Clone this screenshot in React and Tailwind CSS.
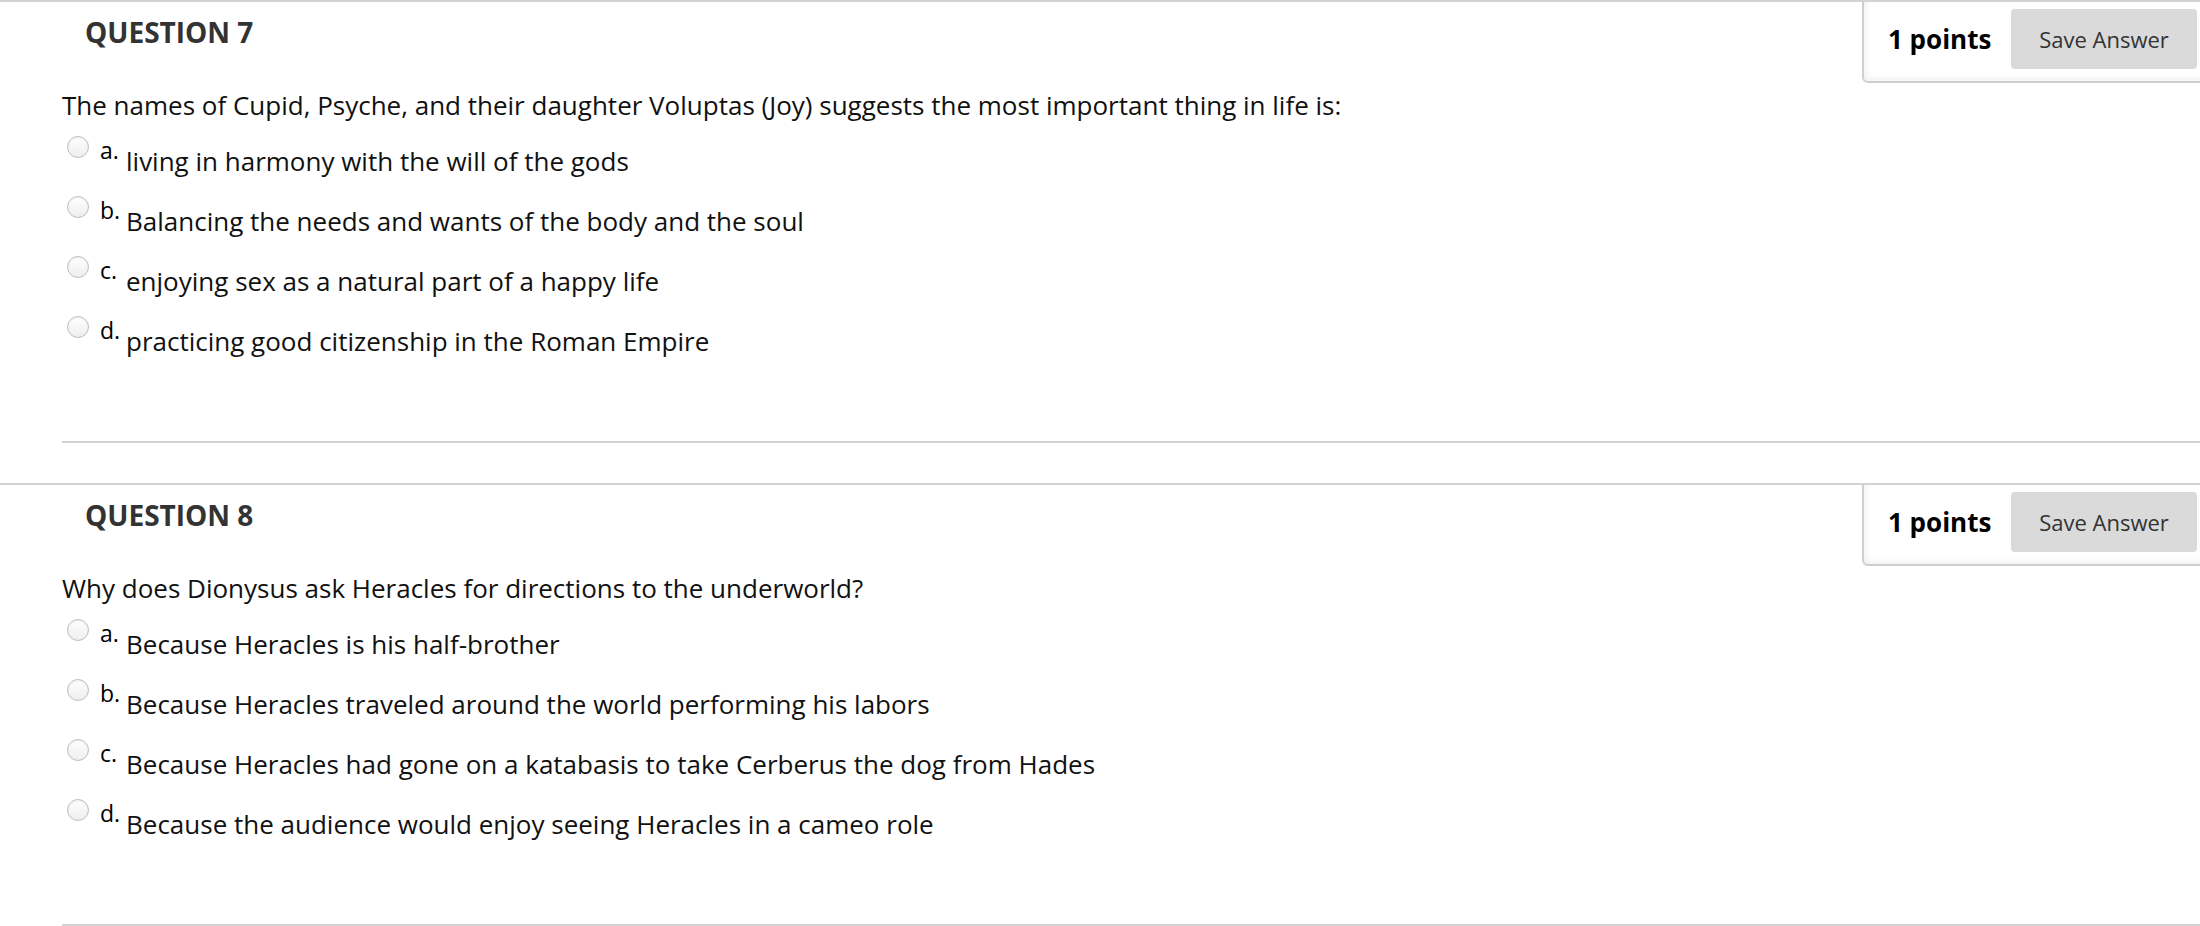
import React from 'react';

const questions = [
  {
    number: 7,
    text: 'The names of Cupid, Psyche, and their daughter Voluptas (Joy) suggests the most important thing in life is:',
    options: [
      'living in harmony with the will of the gods',
      'Balancing the needs and wants of the body and the soul',
      'enjoying sex as a natural part of a happy life',
      'practicing good citizenship in the Roman Empire',
    ],
  },
  {
    number: 8,
    text: 'Why does Dionysus ask Heracles for directions to the underworld?',
    options: [
      'Because Heracles is his half-brother',
      'Because Heracles traveled around the world performing his labors',
      'Because Heracles had gone on a katabasis to take Cerberus the dog from Hades',
      'Because the audience would enjoy seeing Heracles in a cameo role',
    ],
  },
];

const letters = ['a.', 'b.', 'c.', 'd.'];

const Option = ({ letter, text }) => (
  <label className="flex items-start h-[48px] cursor-pointer">
    <span className="mt-[4px] ml-[5px] w-[22px] h-[22px] rounded-full border border-[#bfbfbf] bg-gradient-to-b from-white to-[#eeeeee] shadow-[inset_0_1px_2px_rgba(0,0,0,0.07)] shrink-0" />
    <span className="ml-[11px] mt-[4px] w-[26px] text-[23px] leading-[28px] text-black shrink-0">{letter}</span>
    <span className="mt-[11px] text-[26px] leading-[36px] text-[#111] whitespace-nowrap">{text}</span>
  </label>
);

const QuestionBlock = ({ q }) => (
  <div className="border-t-2 border-[#d3d3d3] mb-[40px]">
    <div className="flex justify-between items-start">
      <h3 className="pl-[85px] pt-[11px] text-[28px] leading-[38px] font-bold text-[#333]">
        QUESTION {q.number}
      </h3>
      <div className="flex items-center w-[338px] pl-[24px] pr-[3px] pt-[7px] pb-[12px] border-l-2 border-b-2 border-[#cfcfcf] rounded-bl-[6px] shadow-[inset_3px_-3px_5px_rgba(0,0,0,0.05)]">
        <span className="text-[26px] leading-[36px] font-bold text-black">1 points</span>
        <button className="ml-auto h-[60px] w-[186px] rounded-[4px] bg-[#dadada] text-[22px] text-[#333]">
          Save Answer
        </button>
      </div>
    </div>
    <div className="ml-[62px]">
      <p className="mt-[4px] text-[26px] leading-[36px] text-[#111]">{q.text}</p>
      <div className="mt-[9px] flex flex-col gap-[12px]">
        {q.options.map((opt, i) => (
          <Option key={i} letter={letters[i]} text={opt} />
        ))}
      </div>
      <div className="mt-[81px] border-t-2 border-[#d3d3d3]" />
    </div>
  </div>
);

export default function App() {
  return (
    <div className="w-[2200px] min-h-[926px] bg-white font-['Open_Sans',sans-serif] overflow-hidden">
      {questions.map((q) => (
        <QuestionBlock key={q.number} q={q} />
      ))}
    </div>
  );
}
